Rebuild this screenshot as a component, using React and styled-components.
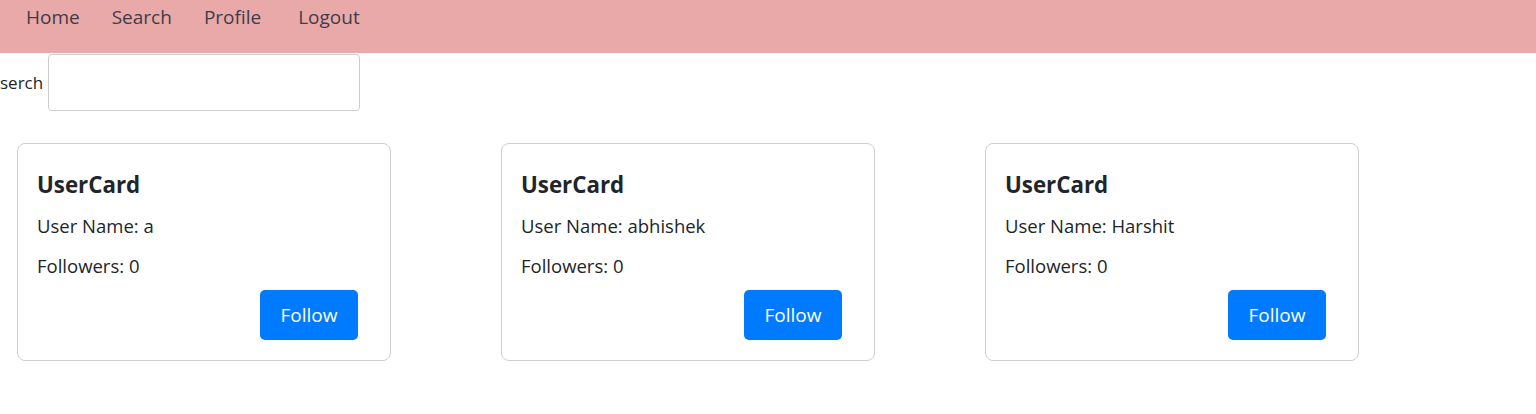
import React from "react";
import styled, { createGlobalStyle } from "styled-components";

const GlobalStyle = createGlobalStyle`
  body {
    margin: 0;
    background: #fff;
    font-family: "Segoe UI", "Open Sans", sans-serif;
    color: #212529;
  }
  * {
    box-sizing: border-box;
  }
`;

const users = [
  { name: "a", followers: 0 },
  { name: "abhishek", followers: 0 },
  { name: "Harshit", followers: 0 },
];

const App = () => {
  return (
    <>
      <GlobalStyle />
      <NavBar>
        <NavLink>Home</NavLink>
        <NavLink>Search</NavLink>
        <NavLink>Profile</NavLink>
        <NavLink extra>Logout</NavLink>
      </NavBar>
      <SearchRow>
        <SearchLabel>serch</SearchLabel>
        <SearchInput type="text" />
      </SearchRow>
      <CardGrid>
        {users.map((u) => (
          <Card key={u.name}>
            <Title>UserCard</Title>
            <Line>User Name: {u.name}</Line>
            <Line last>Followers: {u.followers}</Line>
            <ButtonRow>
              <FollowButton>Follow</FollowButton>
            </ButtonRow>
          </Card>
        ))}
      </CardGrid>
    </>
  );
};

const NavBar = styled.nav`
  height: 53px;
  background: #eaa9a9;
  display: flex;
  align-items: flex-start;
  gap: 32px;
  padding: 2px 0 0 26px;
`;

const NavLink = styled.a`
  font-size: 19px;
  line-height: 30px;
  color: #3d3d4a;
  cursor: pointer;
  margin-left: ${(p) => (p.extra ? "5px" : "0")};
`;

const SearchRow = styled.div`
  display: flex;
  align-items: center;
  gap: 5px;
  margin-top: 1px;
`;

const SearchLabel = styled.label`
  font-size: 17px;
  color: #212529;
`;

const SearchInput = styled.input`
  width: 312px;
  height: 57px;
  border: 1px solid #ccc;
  border-radius: 4px;
  outline: none;
`;

const CardGrid = styled.div`
  display: grid;
  grid-template-columns: repeat(3, 374px);
  column-gap: 110px;
  padding-left: 17px;
  margin-top: 32px;
`;

const Card = styled.div`
  border: 1px solid #cfcfcf;
  border-radius: 8px;
  padding: 27px 20px 20px 19px;
  display: flex;
  flex-direction: column;
  height: 218px;
`;

const Title = styled.h5`
  margin: 0 0 14px;
  font-size: 22.3px;
  line-height: 27px;
  font-weight: 700;
  color: #212529;
`;

const Line = styled.p`
  margin: 0 0 ${(p) => (p.last ? "11px" : "13px")};
  font-size: 18.5px;
  line-height: 27px;
  color: #212529;
`;

const ButtonRow = styled.div`
  display: flex;
  justify-content: flex-end;
  padding-right: 12px;
`;

const FollowButton = styled.button`
  font-family: inherit;
  font-size: 19px;
  line-height: 30px;
  height: 50px;
  width: 98px;
  color: #fff;
  background: #007bff;
  border: none;
  border-radius: 5px;
  cursor: pointer;
`;

export default App;
